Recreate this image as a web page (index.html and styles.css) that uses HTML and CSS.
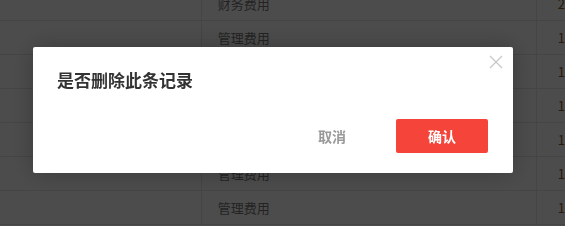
FILE: index.html
```html
<!DOCTYPE html>
<html lang="zh">
<head>
<meta charset="utf-8">
<link rel="stylesheet" href="styles.css">
</head>
<body>
<div class="table">
  <div class="row"><div class="c1"></div><div class="c2">财务费用</div><div class="c3">2</div></div>
  <div class="row"><div class="c1"></div><div class="c2">管理费用</div><div class="c3">1</div></div>
  <div class="row"><div class="c1"></div><div class="c2">管理费用</div><div class="c3">1</div></div>
  <div class="row"><div class="c1"></div><div class="c2">管理费用</div><div class="c3">1</div></div>
  <div class="row"><div class="c1"></div><div class="c2">管理费用</div><div class="c3">1</div></div>
  <div class="row"><div class="c1"></div><div class="c2">管理费用</div><div class="c3">1</div></div>
  <div class="row"><div class="c1"></div><div class="c2">管理费用</div><div class="c3">1</div></div>
</div>
<div class="mask">
  <div class="modal">
    <button class="close" aria-label="关闭">
      <svg width="14" height="14" viewBox="0 0 14 14"><path d="M1 1L13 13M13 1L1 13" stroke="#c8c8c8" stroke-width="1.3" fill="none"/></svg>
    </button>
    <div class="title">是否删除此条记录</div>
    <div class="actions">
      <button class="btn cancel">取消</button>
      <button class="btn ok">确认</button>
    </div>
  </div>
</div>
</body>
</html>
```
FILE: styles.css
```css
html, body {
  margin: 0;
  padding: 0;
  width: 565px;
  height: 226px;
  overflow: hidden;
  background: #fff;
  font-family: "Noto Sans CJK SC", "Noto Sans", sans-serif;
}
.table {
  margin-top: -13px;
}
.row {
  display: flex;
  height: 33px;
  border-bottom: 1px solid #e6e6e6;
  font-size: 13px;
  color: #777;
}
.c1 {
  width: 205px;
  border-right: 1px solid #e6e6e6;
}
.c2 {
  width: 325px;
  padding-left: 16px;
  border-right: 1px solid #e6e6e6;
  display: flex;
  align-items: center;
}
.c3 {
  padding-left: 21px;
  display: flex;
  align-items: center;
  color: #8a5a2a;
}
.mask {
  position: fixed;
  inset: 0;
  background: rgba(0, 0, 0, 0.7);
}
.modal {
  position: absolute;
  left: 33px;
  top: 47px;
  width: 480px;
  height: 126px;
  box-sizing: border-box;
  background: #fff;
  border-radius: 2px;
  padding: 21px 25px 20px 24px;
  display: flex;
  flex-direction: column;
  justify-content: space-between;
  box-shadow: 0 0 24px rgba(0, 0, 0, 0.25);
}
.close {
  position: absolute;
  top: 8px;
  right: 10px;
  width: 14px;
  height: 14px;
  padding: 0;
  border: 0;
  background: none;
  display: flex;
}
.title {
  font-size: 17px;
  font-weight: 700;
  color: #333;
  line-height: 24px;
}
.actions {
  display: flex;
  justify-content: flex-end;
  gap: 18px;
}
.btn {
  width: 92px;
  height: 34px;
  border: 0;
  border-radius: 2px;
  font-family: inherit;
  font-size: 14px;
  font-weight: 700;
  padding: 0;
}
.cancel {
  background: #fff;
  color: #999;
}
.ok {
  background: #f5443a;
  color: #fff;
}
```
